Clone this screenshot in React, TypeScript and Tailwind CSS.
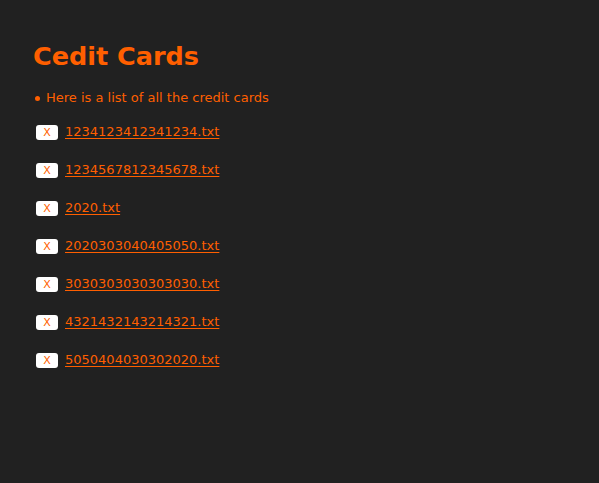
import React from 'react';

const files = [
  '1234123412341234.txt',
  '1234567812345678.txt',
  '2020.txt',
  '2020303040405050.txt',
  '3030303030303030.txt',
  '4321432143214321.txt',
  '5050404030302020.txt',
];

export default function App() {
  return (
    <div className="min-h-[483px] bg-[#212121] px-[33px] pt-[40px] font-['DejaVu_Sans',Verdana,sans-serif] text-[#ff5f00]">
      <h1 className="text-[25.5px] font-bold leading-[32px]">Cedit Cards</h1>
      <ul className="mt-[18px] text-[13px] leading-[16px]">
        <li className="flex items-center gap-[5px]">
          <span className="ml-[2px] w-[5px] h-[5px] rounded-full bg-[#ff5f00]" />
          <span className="ml-[1px]">Here is a list of all the credit cards</span>
        </li>
      </ul>
      <div className="mt-[18px] flex flex-col gap-[22px] pl-[3px]">
        {files.map(f => (
          <div key={f} className="flex items-center h-[16px] text-[13px]">
            <button className="w-[22px] h-[15px] rounded-[3px] bg-white text-[#ff5f00] text-[11px] leading-[15px] text-center">X</button>
            <a href="#" className="ml-[7px] underline underline-offset-2">{f}</a>
          </div>
        ))}
      </div>
    </div>
  );
}
